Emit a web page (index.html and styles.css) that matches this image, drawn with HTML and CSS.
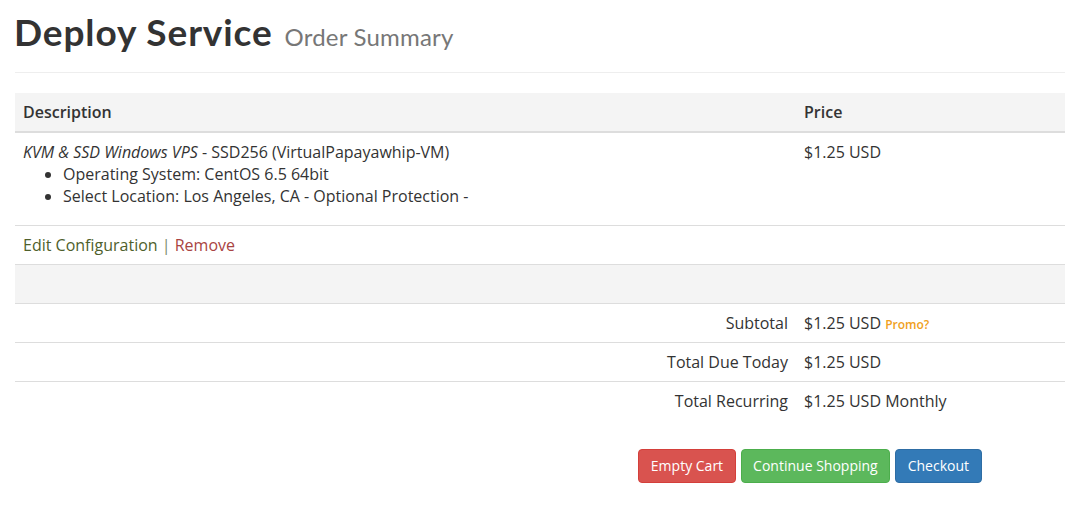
FILE: index.html
```html
<!DOCTYPE html>
<html>
<head>
<meta charset="utf-8">
<link rel="stylesheet" href="styles.css">
</head>
<body>
<div class="page">
  <div class="page-header">
    <h1 class="title">Deploy Service <small class="subtitle">Order Summary</small></h1>
  </div>
  <table class="cart">
    <thead>
      <tr><th class="col-desc">Description</th><th class="col-price">Price</th></tr>
    </thead>
    <tbody>
      <tr>
        <td>
          <em>KVM &amp; SSD Windows VPS</em> - SSD256 (VirtualPapayawhip-VM)
          <ul class="opts">
            <li>Operating System: CentOS 6.5 64bit</li>
            <li>Select Location: Los Angeles, CA - Optional Protection -</li>
          </ul>
        </td>
        <td>$1.25 USD</td>
      </tr>
      <tr>
        <td><a class="edit">Edit Configuration</a> <span class="sep">|</span> <a class="remove">Remove</a></td>
        <td></td>
      </tr>
      <tr class="blank"><td></td><td></td></tr>
      <tr><td class="label">Subtotal</td><td>$1.25 USD <a class="promo">Promo?</a></td></tr>
      <tr><td class="label">Total Due Today</td><td>$1.25 USD</td></tr>
      <tr><td class="label">Total Recurring</td><td>$1.25 USD Monthly</td></tr>
    </tbody>
  </table>
  <div class="actions">
    <button class="btn btn-red">Empty Cart</button>
    <button class="btn btn-green">Continue Shopping</button>
    <button class="btn btn-blue">Checkout</button>
  </div>
</div>
</body>
</html>
```

FILE: styles.css
```css
html, body {
  margin: 0;
  padding: 0;
  background: #fff;
}
body {
  font-family: "Open Sans", "Noto Sans", sans-serif;
  font-size: 16px;
  line-height: 22px;
  color: #333;
}
.page {
  padding: 0 15px;
}
.page-header {
  padding-top: 10px;
  padding-bottom: 13px;
  border-bottom: 1px solid #eee;
  margin-bottom: 20px;
}
.title {
  margin: 0 0 0 -1px;
  font-family: Lato, "Open Sans", sans-serif;
  font-weight: 700;
  font-size: 37px;
  line-height: 44px;
  color: #333;
  letter-spacing: 0.9px;
}
.subtitle {
  font-family: Lato, "Open Sans", sans-serif;
  font-weight: 400;
  font-size: 24px;
  color: #777;
  letter-spacing: 0.2px;
  margin-left: 2px;
}
.cart {
  width: 100%;
  border-collapse: collapse;
}
.cart th, .cart td {
  padding: 8px;
  text-align: left;
  vertical-align: top;
}
.cart th {
  background: #f4f4f4;
  font-weight: 600;
  border-bottom: 2px solid #ddd;
}
.col-price {
  width: 253px;
}
.cart tbody td {
  border-top: 1px solid #ddd;
  height: 22px;
}
.cart tbody tr:first-child td {
  border-top: 0;
}
.opts {
  margin: 0 0 10px;
  padding-left: 40px;
}
.edit {
  color: #4f5f2c;
}
.sep {
  color: #7a8a6a;
}
.remove {
  color: #a94442;
}
.blank td {
  background: #f4f4f4;
}
.cart td.label {
  text-align: right;
}
.promo {
  color: #f0a020;
  font-size: 12px;
  line-height: 1;
  font-weight: 600;
}
.actions {
  display: flex;
  justify-content: flex-end;
  gap: 5px;
  margin-top: 29px;
  padding-right: 83px;
}
.btn {
  font-family: "Open Sans", "Noto Sans", sans-serif;
  font-size: 14px;
  line-height: 20px;
  padding: 6px 12px;
  border-radius: 4px;
  color: #fff;
  border: 1px solid transparent;
  cursor: pointer;
}
.btn-green {
  padding: 6px 11px;
}
.btn-red {
  background: #d9534f;
  border-color: #d43f3a;
}
.btn-green {
  background: #5cb85c;
  border-color: #4cae4c;
}
.btn-blue {
  background: #337ab7;
  border-color: #2e6da4;
}
```
